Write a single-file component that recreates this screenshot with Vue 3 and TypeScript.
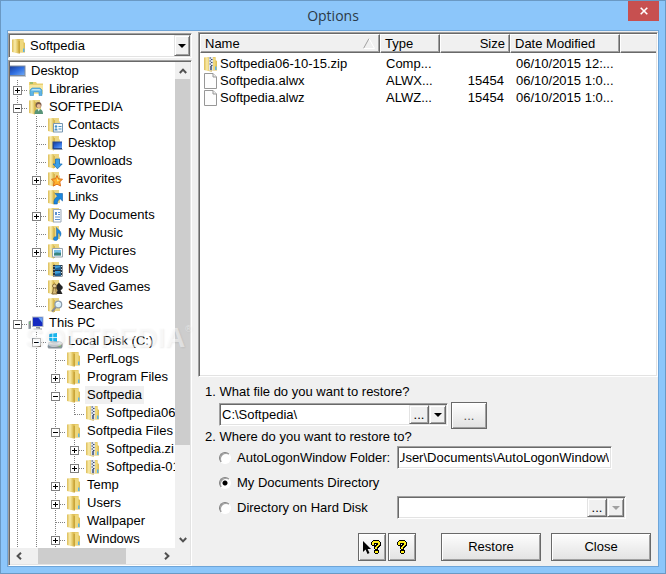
<script setup lang="ts">
import { onMounted, ref } from 'vue'

interface TreeRow {
  label: string
  icon: string
  // One character per indent level: '|' passes through, 'T' branches, 'L' ends a branch.
  guides: string
  toggle?: '+' | '-'
  selected?: boolean
}

interface FileRow {
  name: string
  icon: string
  type: string
  size: string
  modified: string
}

const tree: TreeRow[] = [
  { label: 'Desktop', icon: 'desktop', guides: '' },
  { label: 'Libraries', icon: 'libraries', guides: 'T', toggle: '+' },
  { label: 'SOFTPEDIA', icon: 'user', guides: 'T', toggle: '-' },
  { label: 'Contacts', icon: 'contacts', guides: '|T' },
  { label: 'Desktop', icon: 'desk-folder', guides: '|T' },
  { label: 'Downloads', icon: 'downloads', guides: '|T' },
  { label: 'Favorites', icon: 'favorites', guides: '|T', toggle: '+' },
  { label: 'Links', icon: 'links', guides: '|T' },
  { label: 'My Documents', icon: 'documents', guides: '|T', toggle: '+' },
  { label: 'My Music', icon: 'music', guides: '|T' },
  { label: 'My Pictures', icon: 'pictures', guides: '|T', toggle: '+' },
  { label: 'My Videos', icon: 'videos', guides: '|T' },
  { label: 'Saved Games', icon: 'games', guides: '|T' },
  { label: 'Searches', icon: 'searches', guides: '|L' },
  { label: 'This PC', icon: 'pc', guides: 'T', toggle: '-' },
  { label: 'Local Disk (C:)', icon: 'disk', guides: '|T', toggle: '-' },
  { label: 'PerfLogs', icon: 'folder', guides: '||T' },
  { label: 'Program Files', icon: 'folder', guides: '||T', toggle: '+' },
  { label: 'Softpedia', icon: 'folder', guides: '||T', toggle: '-', selected: true },
  { label: 'Softpedia06', icon: 'zip', guides: '|||L' },
  { label: 'Softpedia Files', icon: 'folder', guides: '||T', toggle: '-' },
  { label: 'Softpedia.zi', icon: 'zip', guides: '|||T', toggle: '+' },
  { label: 'Softpedia-01', icon: 'zip', guides: '|||L', toggle: '+' },
  { label: 'Temp', icon: 'folder', guides: '||T', toggle: '+' },
  { label: 'Users', icon: 'folder', guides: '||T', toggle: '+' },
  { label: 'Wallpaper', icon: 'folder', guides: '||T' },
  { label: 'Windows', icon: 'folder', guides: '||T', toggle: '+' },
]

const files: FileRow[] = [
  { name: 'Softpedia06-10-15.zip', icon: 'zip', type: 'Comp...', size: '', modified: '06/10/2015 12:...' },
  { name: 'Softpedia.alwx', icon: 'file', type: 'ALWX...', size: '15454', modified: '06/10/2015 1:0...' },
  { name: 'Softpedia.alwz', icon: 'file', type: 'ALWZ...', size: '15454', modified: '06/10/2015 1:0...' },
]

const location = ref('Softpedia')
const sourcePath = ref('C:\\Softpedia\\')
const targetPath = ref('User\\Documents\\AutoLogonWindow\\')
const diskPath = ref('')
const target = ref('documents')
const targetField = ref<HTMLInputElement | null>(null)

const guideClass = (c: string) => ({ '|': 'pass', T: 'branch', L: 'end' })[c]

// Keep the tail of the folder path in view.
onMounted(() => {
  if (targetField.value) targetField.value.scrollLeft = targetField.value.scrollWidth
})
</script>

<template>
  <svg class="sprite" aria-hidden="true">
    <defs>
      <linearGradient id="gold" x1="0" x2="1" y1="0" y2="0">
        <stop offset="0" stop-color="#dcbc58" />
        <stop offset=".45" stop-color="#faecaa" />
        <stop offset="1" stop-color="#d9b84c" />
      </linearGradient>
      <linearGradient id="screen" x1="0" x2="1" y1="0" y2="1">
        <stop offset="0" stop-color="#1c3f9c" />
        <stop offset=".5" stop-color="#2f6ee0" />
        <stop offset="1" stop-color="#6fa8f4" />
      </linearGradient>
    </defs>
    <symbol id="folder" viewBox="0 0 16 16">
      <path d="M4 1h8.500v3l1.500 1v9.500H4z" fill="#dfc05a" />
      <path d="M9 1.500h3.500V14H9z" fill="#efd87c" />
      <path d="M1 1.500 5.500 1l2 1v13.500L1 14z" fill="url(#gold)" />
      <path d="M7.500 3h1.500v12.500H7.500z" fill="#c9a53a" />
      <path d="M12 10.500h1.500V14H12z" fill="#5cb4e8" />
    </symbol>
    <symbol id="half" viewBox="0 0 16 16">
      <path d="M5 1h7v3l1 1v9H5z" fill="#ecd684" />
      <path d="M1 1.500 5.500 1l1.500 1v13.500L1 14z" fill="url(#gold)" />
      <path d="M6.500 3H8v12H6.500z" fill="#d7b850" />
    </symbol>
    <symbol id="desktop" viewBox="0 0 16 16">
      <path d="M0 2.500h15.500V14H0z" fill="#7f8b9c" />
      <path d="M0 3.500h14.500V12H0z" fill="url(#screen)" />
      <path d="M0 13h15.500v1H0z" fill="#c4ccd6" />
    </symbol>
    <symbol id="libraries" viewBox="0 0 16 16">
      <path d="M1 1h7l1 1.500h6V12H1z" fill="#e9cf70" />
      <path d="M1 4h14v9H1z" fill="#f6e69e" />
      <path d="M2 1.500h3v1H2z" fill="#55a85e" />
      <path d="M2 14.500V9l2-2h8l2 2v5.500h-3V11H5.500v3.500z" fill="#5eb5e5" stroke="#3992cb" stroke-width=".6" />
      <path d="M3 9.500 4.500 8h7L13 9.500z" fill="#b8e4f8" />
    </symbol>
    <symbol id="user" viewBox="0 0 16 16">
      <use href="#half" />
      <circle cx="10.500" cy="6" r="3" fill="#7b5b45" />
      <circle cx="10.800" cy="7" r="2.100" fill="#e8bb95" />
      <path d="M6.500 15c0-4 2-5 4.200-5S15 11 15 15z" fill="#579477" />
      <path d="m9.500 10 1.200 2.500L12 10z" fill="#e6f1ec" />
    </symbol>
    <symbol id="contacts" viewBox="0 0 16 16">
      <use href="#half" />
      <path d="M6.500 6.500h9V15h-9z" fill="#f4f9fd" stroke="#7797b2" />
      <circle cx="9" cy="9.500" r="1.200" fill="#3f91c8" />
      <path d="M7.500 13.500c0-3 3-3 3 0zM11.500 9h3v1h-3zM11.500 11.500h3v1h-3z" fill="#4b92c4" />
    </symbol>
    <symbol id="desk-folder" viewBox="0 0 16 16">
      <use href="#half" />
      <path d="M5.500 6.500H15V14H5.500z" fill="#24468f" />
      <path d="M7 7.500h8V13H7z" fill="url(#screen)" />
      <path d="M6 14h9.500v1H6z" fill="#8f9aab" />
    </symbol>
    <symbol id="downloads" viewBox="0 0 16 16">
      <use href="#half" />
      <path d="M8.500 6h4v5h2.700l-4.700 4.800L6 11h2.500z" fill="#3aa0e8" stroke="#1c70b8" stroke-width=".8" />
    </symbol>
    <symbol id="favorites" viewBox="0 0 16 16">
      <use href="#half" />
      <path d="m10 4.500 1.600 3.300 3.900.4-2.700 2.700.8 4.100L10 13.200 6.400 15l.8-4.100-2.700-2.700 3.900-.4z" fill="#ffb22e" stroke="#dc6a17" stroke-width=".9" />
      <path d="m10 7 1 2 2 .3-3 1.200z" fill="#ffe68a" />
    </symbol>
    <symbol id="links" viewBox="0 0 16 16">
      <use href="#half" />
      <path d="M8 4.500h7.500V12l-2.400-2.300C11 11 10.200 12.500 10.300 15H7c-.5-3.500.8-6 3.500-7.800z" fill="#1b86dc" stroke="#1262ac" stroke-width=".6" />
    </symbol>
    <symbol id="documents" viewBox="0 0 16 16">
      <use href="#half" />
      <path d="M6.500 2.500H14V15H6.500z" fill="#fafcff" stroke="#9aa8b8" />
      <path d="M8 5h2v3H8zM11 5h2v1h-2zM11 7h2v1h-2zM8 9.500h5v1H8zM8 12h5v1H8z" fill="#5a8fd0" />
    </symbol>
    <symbol id="music" viewBox="0 0 16 16">
      <use href="#half" />
      <path d="M9.500 2.500c.8 2.200 4.500 3 4.500 6 0 1.400-.4 2.300-1 3 .2-2.400-.8-3.200-2-3.700v5.400c0 3-4.500 3.200-4.500.6 0-1.700 1.700-2.200 3-1.800z" fill="#1e8ae0" stroke="#1766ab" stroke-width=".5" />
    </symbol>
    <symbol id="pictures" viewBox="0 0 16 16">
      <use href="#half" />
      <path d="M5.500 5.500h10V14h-10z" fill="#fbfcfd" stroke="#98a4ae" />
      <path d="M7 7h7v5.500H7z" fill="#79c0e8" />
      <path d="M7 10.500c2-2 4 0 7-1v3H7z" fill="#3b847d" />
    </symbol>
    <symbol id="videos" viewBox="0 0 16 16">
      <use href="#half" />
      <path d="M6 4h9.500v11.500H6z" fill="#273440" />
      <path d="M8 4.500h5.500V9H8zM8 10h5.500v5H8z" fill="#3c9edb" />
      <path d="M8 7.500 13.500 6v3H8zM8 13l5.500-1v3H8z" fill="#1d5f95" />
      <path d="M6.500 5h1v1h-1zM6.500 8h1v1h-1zM6.500 11h1v1h-1zM6.500 14h1v1h-1zM14 5h1v1h-1zM14 8h1v1h-1zM14 11h1v1h-1zM14 14h1v1h-1z" fill="#d7dde2" />
    </symbol>
    <symbol id="games" viewBox="0 0 16 16">
      <use href="#half" />
      <path d="M12 3.500 13 5l2.500 2.500c.8 2-.5 3-2 3.500l2 4h-6l1-4C8 9 9.500 6 12 3.500z" fill="#252525" />
      <circle cx="7.500" cy="7" r="2" fill="#e6d09a" stroke="#715526" stroke-width=".8" />
      <path d="M6.300 9h2.400l.5 4 1 2H4.800l1-2z" fill="#d8bc78" stroke="#715526" stroke-width=".8" />
    </symbol>
    <symbol id="searches" viewBox="0 0 16 16">
      <use href="#half" />
      <path d="m9 10-4 4.500" stroke="#8b8d92" stroke-width="2" fill="none" />
      <circle cx="11.300" cy="7.500" r="3.400" fill="#d9effb" stroke="#8c9cab" stroke-width="1.200" />
      <path d="M9.500 7c.4-1.300 1.500-1.800 2.500-1.500" stroke="#fff" fill="none" />
    </symbol>
    <symbol id="pc" viewBox="0 0 16 16">
      <path d="M.5 6.500 3 5.500v8.500H.5z" fill="#8d949b" />
      <path d="M1 7.500h1v1H1z" fill="#5fcf5f" />
      <path d="M4 1.500h11.500V12H4z" fill="#b4bbc5" />
      <path d="M5 2.500h9.500V11H5z" fill="#1429c0" />
      <path d="M10 2.500h4.500V8z" fill="#6aa3f2" />
      <path d="M8 12h4v1.500h2v1H5.500v-1H8z" fill="#8e969f" />
    </symbol>
    <symbol id="disk" viewBox="0 0 16 16">
      <path d="M2 1 5.500.5V4H2zM6.200.4 10 0v4H6.200zM2 4.700h3.500v3.500L2 7.700zM6.200 4.700H10v4l-3.800-.4z" fill="#18b4ec" />
      <path d="m1.500 9.500 2-1h10l2 1.500v4l-1 1.500H1.500L.5 14z" fill="#8c969d" />
      <path d="m1.500 10 2-1h9.500l2 1.500-1 1H2z" fill="#c9d0d4" />
      <path d="M11.500 12.500h2.500v1h-2.500z" fill="#6ed36e" />
    </symbol>
    <symbol id="zip" viewBox="0 0 16 16">
      <use href="#folder" />
      <path d="M6 1h4v13.500H6z" fill="#dfe4ec" />
      <path d="M6.500 1.500H8v1H6.500zM8 3h1.500v1H8zM6.500 4.500H8v1H6.500zM8 6h1.500v1H8zM6.500 7.500H8v1H6.500zM8 9h1.500v1H8z" fill="#38476b" />
      <path d="M7 10h2v4H7z" fill="#66738f" />
    </symbol>
    <symbol id="file" viewBox="0 0 16 16">
      <path d="M1.500.500h8.500l3.500 3.500v11.500h-12z" fill="#fdfdfd" stroke="#979797" />
      <path d="M10 .500V4h3.500" fill="#eee" stroke="#979797" />
    </symbol>
    <symbol id="question" viewBox="0 0 10 14">
      <path d="M2 0h6v1h1v1h1v4H9v1H8v1H7v2h1v3H7v1H4v-1H3v-3h1V9H3V6h1V5h1V4H4v2H1V5H0V2h1V1h1z" fill="#000" />
      <path d="M2 1h6v1h1v3H8v1H7v1H6v2H4V7h1V6h1V5h1V3H3v2H1V2h1zM4 11h3v2H4z" fill="#ffee1c" />
    </symbol>
  </svg>

  <main class="window">
    <header class="titlebar">
      <h1>Options</h1>
      <button type="button" class="close" aria-label="Close window">
        <svg viewBox="0 0 8 8"><path d="m.7.7 6.600 6.600M7.300.7.7 7.300" stroke="#fff" stroke-width="1.600" /></svg>
      </button>
    </header>

    <div class="client">
      <aside class="side">
        <div class="location sunken">
          <svg class="icon"><use href="#folder" /></svg>
          <select v-model="location" aria-label="Location">
            <option>Softpedia</option>
          </select>
          <span class="drop raised"><i class="caret"></i></span>
        </div>

        <div class="tree sunken">
          <ul class="nodes">
            <li v-for="(row, i) in tree" :key="i">
              <span v-for="(g, k) in row.guides" :key="k" class="guide" :class="guideClass(g)">
                <button
                  v-if="row.toggle && k === row.guides.length - 1"
                  type="button"
                  class="toggle"
                  :class="{ plus: row.toggle === '+' }"
                  :aria-label="(row.toggle === '+' ? 'Expand ' : 'Collapse ') + row.label"
                ></button>
              </span>
              <svg class="icon"><use :href="'#' + row.icon" /></svg>
              <span class="label" :class="{ selected: row.selected }">{{ row.label }}</span>
            </li>
          </ul>
          <div class="vscroll">
            <button type="button" aria-label="Scroll up">
              <svg viewBox="0 0 8 6"><path d="m.8 5 3.200-3.400L7.200 5" /></svg>
            </button>
            <div class="thumb"></div>
            <button type="button" aria-label="Scroll down">
              <svg viewBox="0 0 8 6"><path d="M.8 1 4 4.400 7.200 1" /></svg>
            </button>
          </div>
          <div class="hscroll">
            <button type="button" aria-label="Scroll left">
              <svg viewBox="0 0 6 8"><path d="M5 .8 1.600 4 5 7.200" /></svg>
            </button>
            <div class="thumb"></div>
            <button type="button" aria-label="Scroll right">
              <svg viewBox="0 0 6 8"><path d="M1 .8 4.400 4 1 7.200" /></svg>
            </button>
          </div>
        </div>
        <div class="watermark" aria-hidden="true">SOFTPEDIA<span>®</span></div>
      </aside>

      <section class="content">
        <div class="list sunken">
          <table>
            <colgroup>
              <col class="c-name" /><col class="c-type" /><col class="c-size" /><col class="c-date" /><col />
            </colgroup>
            <thead>
              <tr>
                <th>
                  <div class="sorted">
                    Name
                    <svg viewBox="0 0 12 11"><path d="M6 .5.500 10.500" stroke="#a0a0a0" /><path d="m6 .5 5.500 10H.5" stroke="#fff" fill="none" /></svg>
                  </div>
                </th>
                <th>Type</th>
                <th class="num">Size</th>
                <th>Date Modified</th>
                <th></th>
              </tr>
            </thead>
            <tbody>
              <tr v-for="f in files" :key="f.name">
                <td>
                  <div class="file"><svg class="icon"><use :href="'#' + f.icon" /></svg>{{ f.name }}</div>
                </td>
                <td>{{ f.type }}</td>
                <td class="num">{{ f.size }}</td>
                <td>{{ f.modified }}</td>
                <td></td>
              </tr>
            </tbody>
          </table>
        </div>

        <form class="form" @submit.prevent>
          <label class="question" for="source">1. What file do you want to restore?</label>
          <div class="source">
            <div class="field sunken">
              <input id="source" v-model="sourcePath" type="text" />
              <button type="button" class="raised dots" aria-label="Pick a file">...</button>
              <button type="button" class="raised drop-btn" aria-label="Recent files"><i class="caret"></i></button>
            </div>
            <button type="button" class="push browse" aria-label="Browse">...</button>
          </div>

          <p id="where" class="question where">2. Where do you want to restore to?</p>
          <div class="targets" role="radiogroup" aria-labelledby="where">
            <label><input v-model="target" type="radio" value="folder" />AutoLogonWindow Folder:</label>
            <div class="field sunken short">
              <input ref="targetField" v-model="targetPath" type="text" aria-label="AutoLogonWindow folder path" />
            </div>
            <label class="wide"><input v-model="target" type="radio" value="documents" />My Documents Directory</label>
            <label><input v-model="target" type="radio" value="disk" />Directory on Hard Disk</label>
            <div class="field sunken">
              <input v-model="diskPath" type="text" aria-label="Directory on hard disk path" />
              <button type="button" class="raised dots" aria-label="Pick a directory">...</button>
              <button type="button" class="raised drop-btn" disabled aria-label="Recent directories"><i class="caret"></i></button>
            </div>
          </div>

          <div class="actions">
            <div class="help">
              <button type="button" class="push square" aria-label="What's this?">
                <svg class="pointer" viewBox="0 0 8 13"><path d="M0 0v11l2.600-2.400L4.500 13l2-1-1.900-4H8z" /></svg>
                <svg class="mark"><use href="#question" /></svg>
              </button>
              <button type="button" class="push square" aria-label="Help">
                <svg class="mark"><use href="#question" /></svg>
              </button>
            </div>
            <button type="submit" class="push main">Restore</button>
            <button type="button" class="push main">Close</button>
          </div>
        </form>
      </section>
    </div>
  </main>
</template>

<style>
body {
  margin: 0;
  background: #8cc6fa;
}
</style>

<style scoped>
* {
  box-sizing: border-box;
}

button,
input,
select {
  margin: 0;
  padding: 0;
  border: 0;
  border-radius: 0;
  background: none;
  color: inherit;
  font: inherit;
  appearance: none;
  outline: none;
}

.sprite {
  position: absolute;
  width: 0;
  height: 0;
}

.icon {
  flex: none;
  width: 16px;
  height: 16px;
}

.window {
  display: flex;
  flex-direction: column;
  min-height: 100vh;
  padding: 0 6px 6px;
  border: 1px solid #6a99c4;
  background: #8cc6fa;
  color: #000;
  font: 13px/18px "Liberation Sans", Arial, sans-serif;
}

.titlebar {
  display: grid;
  grid-template-columns: 1fr auto 1fr;
  height: 29px;
}

.titlebar h1 {
  grid-column: 2;
  margin: 0;
  color: #2b3a48;
  font: 14px/29px "Open Sans", "Noto Sans", sans-serif;
}

.close {
  display: flex;
  align-items: center;
  justify-content: center;
  justify-self: end;
  width: 31px;
  height: 20px;
  background: #c75050;
}

.close svg {
  width: 8px;
  height: 8px;
}

.client {
  flex: 1;
  display: grid;
  grid-template-columns: 184px minmax(0, 1fr);
  gap: 6px;
  border: 1px solid #6ea5d8;
  background: #f0f0f0;
}

.sunken {
  border: 1px solid;
  border-color: #a0a0a0 #fff #fff #a0a0a0;
  background: #fff;
  box-shadow: inset 1px 1px #696969, inset -1px -1px #e3e3e3;
  padding: 1px;
}

.raised {
  border: 1px solid;
  border-color: #e3e3e3 #696969 #696969 #e3e3e3;
  background: #f0f0f0;
  box-shadow: inset 1px 1px #fff, inset -1px -1px #a0a0a0;
}

.caret {
  border: 4px solid transparent;
  border-top-color: #000;
  border-bottom: 0;
}

/* Left pane */
.side {
  position: relative;
  display: flex;
  flex-direction: column;
  gap: 2px;
  padding-top: 2px;
}

.location {
  position: relative;
  display: flex;
  align-items: center;
  height: 25px;
}

.location .icon {
  margin-left: 1px;
}

.location select {
  flex: 1;
  height: 21px;
  padding-left: 3px;
}

.drop {
  position: absolute;
  top: 1px;
  right: 1px;
  bottom: 1px;
  width: 16px;
  display: flex;
  align-items: center;
  justify-content: center;
  pointer-events: none;
}

.tree {
  flex: 1;
  display: grid;
  grid-template-columns: minmax(0, 1fr) 15px;
  grid-template-rows: 1fr 16px;
}

.nodes {
  margin: 0;
  padding: 0;
  overflow: hidden;
  list-style: none;
}

.nodes li {
  display: flex;
  align-items: center;
  height: 18px;
  white-space: nowrap;
}

.guide {
  --v: repeating-linear-gradient(#808080 0 1px, transparent 1px 2px);
  --h: repeating-linear-gradient(90deg, #808080 0 1px, transparent 1px 2px);
  flex: none;
  display: flex;
  align-items: flex-end;
  justify-content: flex-end;
  width: 19px;
  height: 18px;
  padding: 0 6px 3px 0;
}

.guide:first-child {
  width: 18px;
}

.pass {
  background: var(--v) right 10px top / 1px 18px no-repeat;
}

.branch {
  background: var(--v) right 10px top / 1px 18px no-repeat, var(--h) right top 10px / 10px 1px no-repeat;
}

.end {
  background: var(--v) right 10px top / 1px 11px no-repeat, var(--h) right top 10px / 10px 1px no-repeat;
}

.toggle {
  width: 9px;
  height: 9px;
  border: 1px solid #808080;
  background: linear-gradient(#000, #000) center / 5px 1px no-repeat, #fff;
}

.toggle.plus {
  background: linear-gradient(#000, #000) center / 5px 1px no-repeat,
    linear-gradient(#000, #000) center / 1px 5px no-repeat, #fff;
}

.label {
  height: 18px;
  margin-left: 3px;
  padding: 0 2px;
}

.label.selected {
  background: #f0f0f0;
}

.vscroll,
.hscroll {
  display: flex;
  background: #f0f0f0;
}

.vscroll {
  flex-direction: column;
}

.hscroll {
  grid-column: 1 / -1;
  padding-right: 15px;
}

.vscroll button,
.hscroll button {
  flex: none;
  display: flex;
  align-items: center;
  justify-content: center;
  width: 17px;
}

.vscroll button {
  width: 15px;
  height: 17px;
}

.vscroll svg {
  width: 8px;
  height: 6px;
}

.hscroll svg {
  width: 6px;
  height: 8px;
}

.vscroll path,
.hscroll path {
  fill: none;
  stroke: #505050;
  stroke-width: 2;
}

.thumb {
  background: #cdcdcd;
}

.vscroll .thumb {
  height: 366px;
  margin-bottom: auto;
}

.hscroll .thumb {
  width: 88px;
  margin: 0 auto 0 11px;
}

.watermark {
  position: absolute;
  top: 289px;
  left: 17px;
  display: flex;
  align-items: flex-start;
  color: rgba(255, 255, 255, 0.5);
  font: bold 28px/36px "Liberation Sans", Arial, sans-serif;
  text-shadow: 1px 1px 2px rgba(0, 0, 0, 0.07);
  white-space: nowrap;
  pointer-events: none;
}

.watermark span {
  font: 9px/18px "Liberation Sans", Arial, sans-serif;
}

/* Right pane */
.content {
  display: flex;
  flex-direction: column;
  padding-top: 1px;
}

.list {
  flex: 1;
}

table {
  width: 100%;
  border-collapse: separate;
  border-spacing: 0;
  table-layout: fixed;
}

.c-name {
  width: 180px;
}

.c-type {
  width: 60px;
}

.c-size {
  width: 70px;
}

.c-date {
  width: 110px;
}

th {
  height: 19px;
  padding: 0 4px;
  border: 1px solid;
  border-color: #fff #696969 #696969 #fff;
  background: #f0f0f0;
  box-shadow: inset -1px -1px #a0a0a0;
  font-weight: normal;
  line-height: 17px;
  text-align: left;
  white-space: nowrap;
}

th:last-child {
  border-right: 0;
  box-shadow: inset 0 -1px #a0a0a0;
}

.sorted {
  display: flex;
  align-items: center;
  justify-content: space-between;
}

.sorted svg {
  width: 12px;
  height: 11px;
}

td {
  height: 17px;
  padding: 0 6px;
  line-height: 17px;
  white-space: nowrap;
}

tbody::before {
  content: "";
  display: table-row;
  height: 2px;
}

td:first-child {
  padding: 0 3px;
}

.num,
th.num {
  text-align: right;
}

.file {
  display: flex;
  align-items: center;
  gap: 1px;
}

.form {
  display: flex;
  flex-direction: column;
  padding: 6px 7px 5px 0;
}

.question {
  margin: 0 0 1px 7px;
}

.where {
  margin: 0 0 2px 7px;
  line-height: 15px;
}

.source {
  display: flex;
  align-items: flex-start;
  gap: 3px;
  height: 27px;
  padding-left: 21px;
}

.source .field {
  width: 229px;
  margin-top: 1px;
}

.field {
  display: flex;
  height: 23px;
}

.field input {
  flex: 1;
  min-width: 0;
  margin: 1px;
}

.dots,
.drop-btn {
  flex: none;
  width: 20px;
  line-height: 17px;
}

.drop-btn {
  display: flex;
  align-items: center;
  justify-content: center;
  width: 17px;
}

.drop-btn:disabled .caret {
  border-top-color: #a0a0a0;
}

.targets {
  display: grid;
  grid-template-columns: 178px minmax(0, 1fr);
  grid-auto-rows: 23px;
  gap: 2px 0;
  padding: 0 25px 0 21px;
}

.targets label {
  display: flex;
  align-items: center;
  gap: 6px;
  white-space: nowrap;
}

.targets .wide {
  grid-column: 1 / -1;
}

.targets .short {
  margin-right: 14px;
}

input[type="radio"] {
  flex: none;
  width: 12px;
  height: 12px;
  border: 1px solid;
  border-color: #808080 #fff #fff #808080;
  border-radius: 50%;
  background: #fff;
  box-shadow: inset 1px 1px #a0a0a0;
}

input[type="radio"]:checked {
  background: radial-gradient(circle, #000 2px, #fff 3px);
}

.actions {
  display: flex;
  justify-content: flex-end;
  gap: 10px;
  margin-top: 14px;
}

.help {
  display: flex;
  gap: 2px;
  margin-right: 15px;
}

.push {
  display: flex;
  align-items: center;
  justify-content: center;
  height: 28px;
  border: 1px solid #696969;
  background: linear-gradient(#fdfdfd, #e2e2e2);
  box-shadow: inset 1px 1px #fff, inset -1px -1px #a0a0a0;
}

.main {
  width: 100px;
}

.square {
  width: 28px;
}

.browse {
  width: 36px;
  height: 27px;
  color: #555;
}

.pointer {
  width: 8px;
  height: 13px;
}

.mark {
  width: 10px;
  height: 14px;
}
</style>
